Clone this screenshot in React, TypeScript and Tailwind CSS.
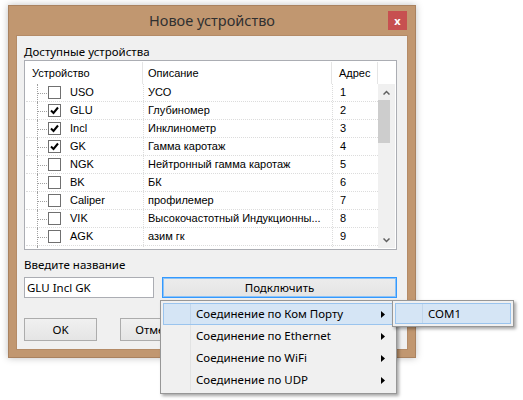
import React from 'react'

type TDevice = { name: string; desc: string; addr: string; checked: boolean }

const devices: TDevice[] = [
  { name: 'USO', desc: 'УСО', addr: '1', checked: false },
  { name: 'GLU', desc: 'Глубиномер', addr: '2', checked: true },
  { name: 'Incl', desc: 'Инклинометр', addr: '3', checked: true },
  { name: 'GK', desc: 'Гамма каротаж', addr: '4', checked: true },
  { name: 'NGK', desc: 'Нейтронный гамма каротаж', addr: '5', checked: false },
  { name: 'BK', desc: 'БК', addr: '6', checked: false },
  { name: 'Caliper', desc: 'профилемер', addr: '7', checked: false },
  { name: 'VIK', desc: 'Высокочастотный Индукционны...', addr: '8', checked: false },
  { name: 'AGK', desc: 'азим гк', addr: '9', checked: false },
  { name: '', desc: '', addr: '', checked: false },
]

const menuItems = [
  'Соединение по Ком Порту',
  'Соединение по Ethernet',
  'Соединение по WiFi',
  'Соединение по UDP',
]

const CheckBox = ({ checked }: { checked: boolean }) => (
  <span className="flex h-[13px] w-[13px] shrink-0 items-center justify-center border border-[#707070] bg-white">
    {checked && (
      <svg width="9" height="9" viewBox="0 0 9 9">
        <path d="M1 4.5 L3.5 7 L8 1.5" fill="none" stroke="#000" strokeWidth="2" />
      </svg>
    )}
  </span>
)

const Arrow = () => (
  <svg width="4" height="7" viewBox="0 0 4 7">
    <path d="M0 0 L4 3.5 L0 7 Z" fill="#000" />
  </svg>
)

const App = () => {
  return (
    <div className="relative h-[400px] w-[523px] overflow-hidden bg-white font-['Noto_Sans',sans-serif] text-[11.5px] text-black">
      {/* window */}
      <div className="absolute left-[8px] top-[5px] flex h-[353px] w-[408px] flex-col border border-[#a98260] bg-[#c19770] px-[7px] pb-[7px] shadow-[0_0_7px_rgba(0,0,0,0.25)]">
        <div className="relative flex h-[29px] shrink-0 items-center justify-center">
          <span className="text-[14.5px] text-[#303030]">Новое устройство</span>
          <span className="absolute right-[1px] top-[5px] flex h-[19px] w-[19px] items-center justify-center bg-[#c75050] text-[11px] font-bold leading-none text-white">
            x
          </span>
        </div>
        <div className="flex flex-1 flex-col border border-[#b48b67] bg-[#f0f0f0] pl-[7px]">
          <div className="mt-[8px] h-[16px] leading-[16px]">Доступные устройства</div>

          {/* tree view */}
          <div className="flex h-[190px] w-[373px] flex-col border border-[#abadb3] bg-white p-px font-['Liberation_Sans',sans-serif] text-[11px]">
            <div className="flex h-[22px] shrink-0 items-center">
              <div className="h-full w-[117px] border-r border-[#e5e5e5] pl-[6px] leading-[22px]">Устройство</div>
              <div className="h-full w-[189px] border-r border-[#e5e5e5] pl-[5px] leading-[22px]">Описание</div>
              <div className="h-full w-[46px] border-r border-[#e5e5e5] pl-[7px] leading-[22px]">Адрес</div>
              <div className="h-full w-[17px]" />
            </div>
            <div className="flex flex-1 overflow-hidden">
              <div className="flex w-[352px] flex-col">
                {devices.map((device, index) => (
                  <div key={index} className="flex h-[18px] shrink-0 border-b border-dotted border-[#dcdcdc]">
                    <div className="relative flex w-[117px] items-center">
                      <span className="absolute left-[11px] top-0 h-[18px] border-l border-dotted border-[#a0a0a0]" />
                      <span className="absolute left-[12px] top-[9px] w-[9px] border-t border-dotted border-[#a0a0a0]" />
                      <span className="ml-[22px]">
                        <CheckBox checked={device.checked} />
                      </span>
                      <span className="ml-[9px]">{device.name}</span>
                    </div>
                    <div className="flex w-[189px] items-center border-l border-dotted border-[#dcdcdc] pl-[4px]">
                      {device.desc}
                    </div>
                    <div className="flex w-[46px] items-center border-l border-dotted border-[#dcdcdc] pl-[7px]">
                      {device.addr}
                    </div>
                  </div>
                ))}
              </div>
              <div className="flex w-[17px] flex-col items-center bg-[#f0f0f0]">
                <div className="flex h-[16px] w-full items-center justify-center">
                  <svg width="7" height="5" viewBox="0 0 7 5">
                    <path d="M0.5 4.5 L3.5 1.5 L6.5 4.5" fill="none" stroke="#606060" strokeWidth="1.5" />
                  </svg>
                </div>
                <div className="h-[43px] w-[12px] self-start bg-[#cdcdcd]" />
                <div className="flex-1" />
                <div className="flex h-[16px] w-full items-center justify-center">
                  <svg width="7" height="5" viewBox="0 0 7 5">
                    <path d="M0.5 0.5 L3.5 3.5 L6.5 0.5" fill="none" stroke="#606060" strokeWidth="1.5" />
                  </svg>
                </div>
              </div>
            </div>
          </div>

          <div className="mt-[7px] h-[16px] leading-[16px]">Введите название</div>
          <div className="mt-[4px] flex h-[21px] items-stretch">
            <div className="flex w-[130px] items-center border border-[#abadb3] bg-white pl-[2px]">GLU Incl GK</div>
            <div className="ml-[8px] flex w-[235px] items-center justify-center border border-[#3399ff] bg-gradient-to-b from-[#ececec] to-[#e4e4e4] shadow-[inset_0_0_0_1px_#8cc2f5]">
              Подключить
            </div>
          </div>
          <div className="mt-[20px] flex gap-[23px]">
            <div className="flex h-[23px] w-[73px] items-center justify-center border border-[#acacac] bg-gradient-to-b from-[#f0f0f0] to-[#e5e5e5]">
              OK
            </div>
            <div className="flex h-[23px] w-[73px] items-center justify-center border border-[#acacac] bg-gradient-to-b from-[#f0f0f0] to-[#e5e5e5]">
              Отмена
            </div>
          </div>
        </div>
      </div>

      {/* popup menu */}
      <div className="absolute left-[160px] top-[300px] w-[237px] border border-[#979797] bg-[#f0f0f0] p-[2px] shadow-[2px_2px_3px_rgba(0,0,0,0.35)]">
        <div className="relative flex flex-col">
          <span className="absolute left-[27px] top-0 h-full border-l border-[#e2e3e3]" />
          {menuItems.map((item, index) => (
            <div
              key={item}
              className={
                index === 0
                  ? 'relative flex h-[22px] items-center border border-[#9ac4ee] bg-[#d5e5f5] pl-[32px] pr-[8px]'
                  : 'relative flex h-[22px] items-center border border-transparent pl-[32px] pr-[8px]'
              }
            >
              {index === 0 && <span className="absolute left-[26px] top-0 h-full border-l border-[#c2d6ea]" />}
              <span className="flex-1">{item}</span>
              <Arrow />
            </div>
          ))}
        </div>
      </div>

      {/* sub menu */}
      <div className="absolute left-[392px] top-[300px] w-[122px] border border-[#979797] bg-[#f0f0f0] p-[2px] shadow-[2px_2px_3px_rgba(0,0,0,0.35)]">
        <div className="relative flex h-[21px] items-center border border-[#9ac4ee] bg-[#d5e5f5] pl-[32px]">
          <span className="absolute left-[26px] top-0 h-full border-l border-[#c2d6ea]" />
          COM1
        </div>
      </div>
    </div>
  )
}

export default App
